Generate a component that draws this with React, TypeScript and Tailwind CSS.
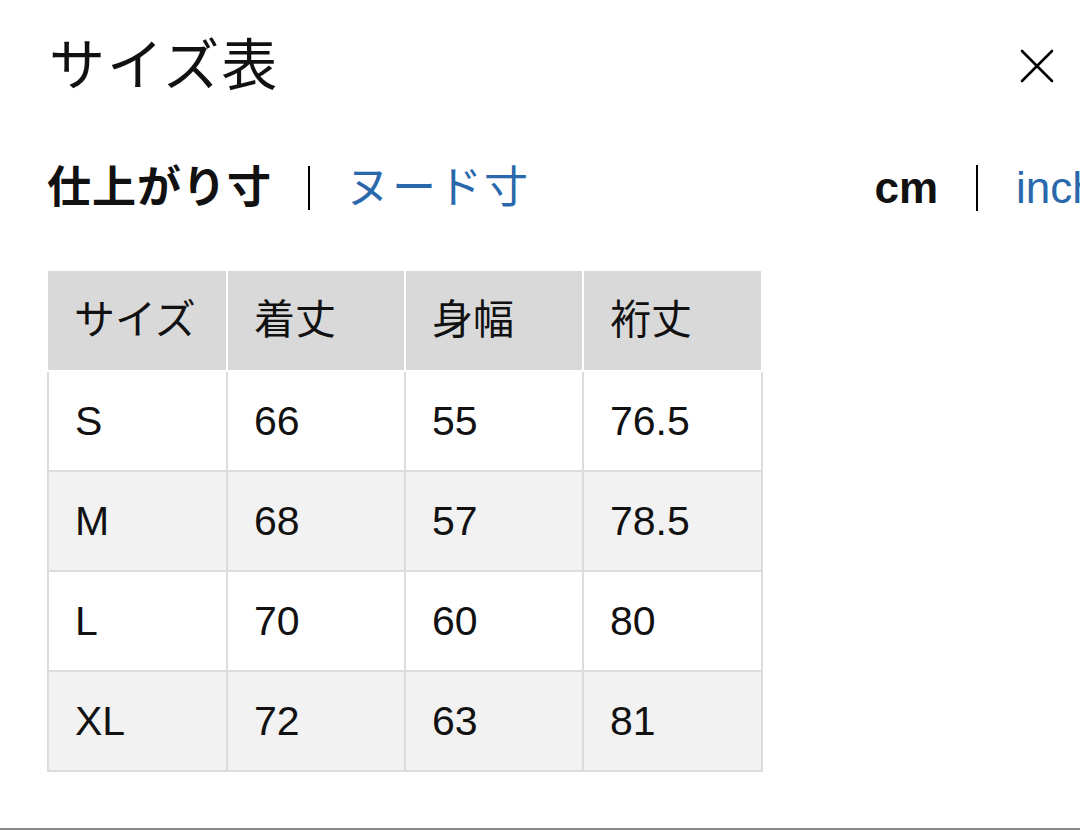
const rows = [
    ["S", "66", "55", "76.5"],
    ["M", "68", "57", "78.5"],
    ["L", "70", "60", "80"],
    ["XL", "72", "63", "81"],
];

const heads = ["サイズ", "着丈", "身幅", "裄丈"];
const widths = ["w-[179px]", "w-[178px]", "w-[178px]", "w-[179px]"];

export default function App() {
    return (
        <div
            className="flex flex-col w-[1080px] h-[830px] bg-white text-[#111] overflow-hidden"
            style={{ fontFamily: '"Liberation Sans", "Noto Sans CJK JP", sans-serif' }}
        >
            <div className="flex items-center justify-between h-[136px] pl-[49px] pr-[26px] pb-[4px]">
                <h1 className="text-[56px] leading-none font-normal tracking-[2px]">サイズ表</h1>
                <button className="w-[34px] h-[34px] flex items-center justify-center text-black">
                    <svg width="34" height="34" viewBox="0 0 34 34" fill="none" stroke="currentColor" strokeWidth="2.6" strokeLinecap="round">
                        <path d="M2 2 L32 32 M32 2 L2 32" />
                    </svg>
                </button>
            </div>

            <div className="flex items-center justify-between h-[110px] pl-[47px] pb-[6px]">
                <div className="flex items-center text-[44px] leading-none">
                    <span className="font-bold tracking-[1px]">仕上がり寸</span>
                    <span className="mx-[36px] w-[2px] h-[44px] bg-black"></span>
                    <span className="text-[#2a68ac] tracking-[2px]">ヌード寸</span>
                </div>
                <div className="flex items-center text-[44px] leading-none whitespace-nowrap">
                    <span className="font-bold">cm</span>
                    <span className="ml-[38px] mr-[38px] w-[2px] h-[46px] bg-black"></span>
                    <span className="text-[#2a68ac] w-[64px] overflow-hidden">inch</span>
                </div>
            </div>

            <div className="pl-[47px] pt-[23px]">
                <table className="border-collapse text-[41px] leading-none">
                    <thead>
                        <tr>
                            {heads.map((h, j) => (
                                <th
                                    key={h}
                                    className={`${widths[j]} h-[101px] bg-[#d9d9d9] border-2 border-white first:border-l-0 pl-[26px] text-left font-normal`}
                                >
                                    {h}
                                </th>
                            ))}
                        </tr>
                    </thead>
                    <tbody>
                        {rows.map((r, i) => (
                            <tr key={r[0]} className={i % 2 === 1 ? "bg-[#f2f2f2]" : "bg-white"}>
                                {r.map((c, j) => (
                                    <td
                                        key={j}
                                        className="h-[100px] border-2 border-[#dcdcdc] pl-[26px] text-left"
                                    >
                                        {c}
                                    </td>
                                ))}
                            </tr>
                        ))}
                    </tbody>
                </table>
            </div>

            <div className="mt-auto h-[2px] bg-[#8a8a8a]"></div>
        </div>
    );
}
